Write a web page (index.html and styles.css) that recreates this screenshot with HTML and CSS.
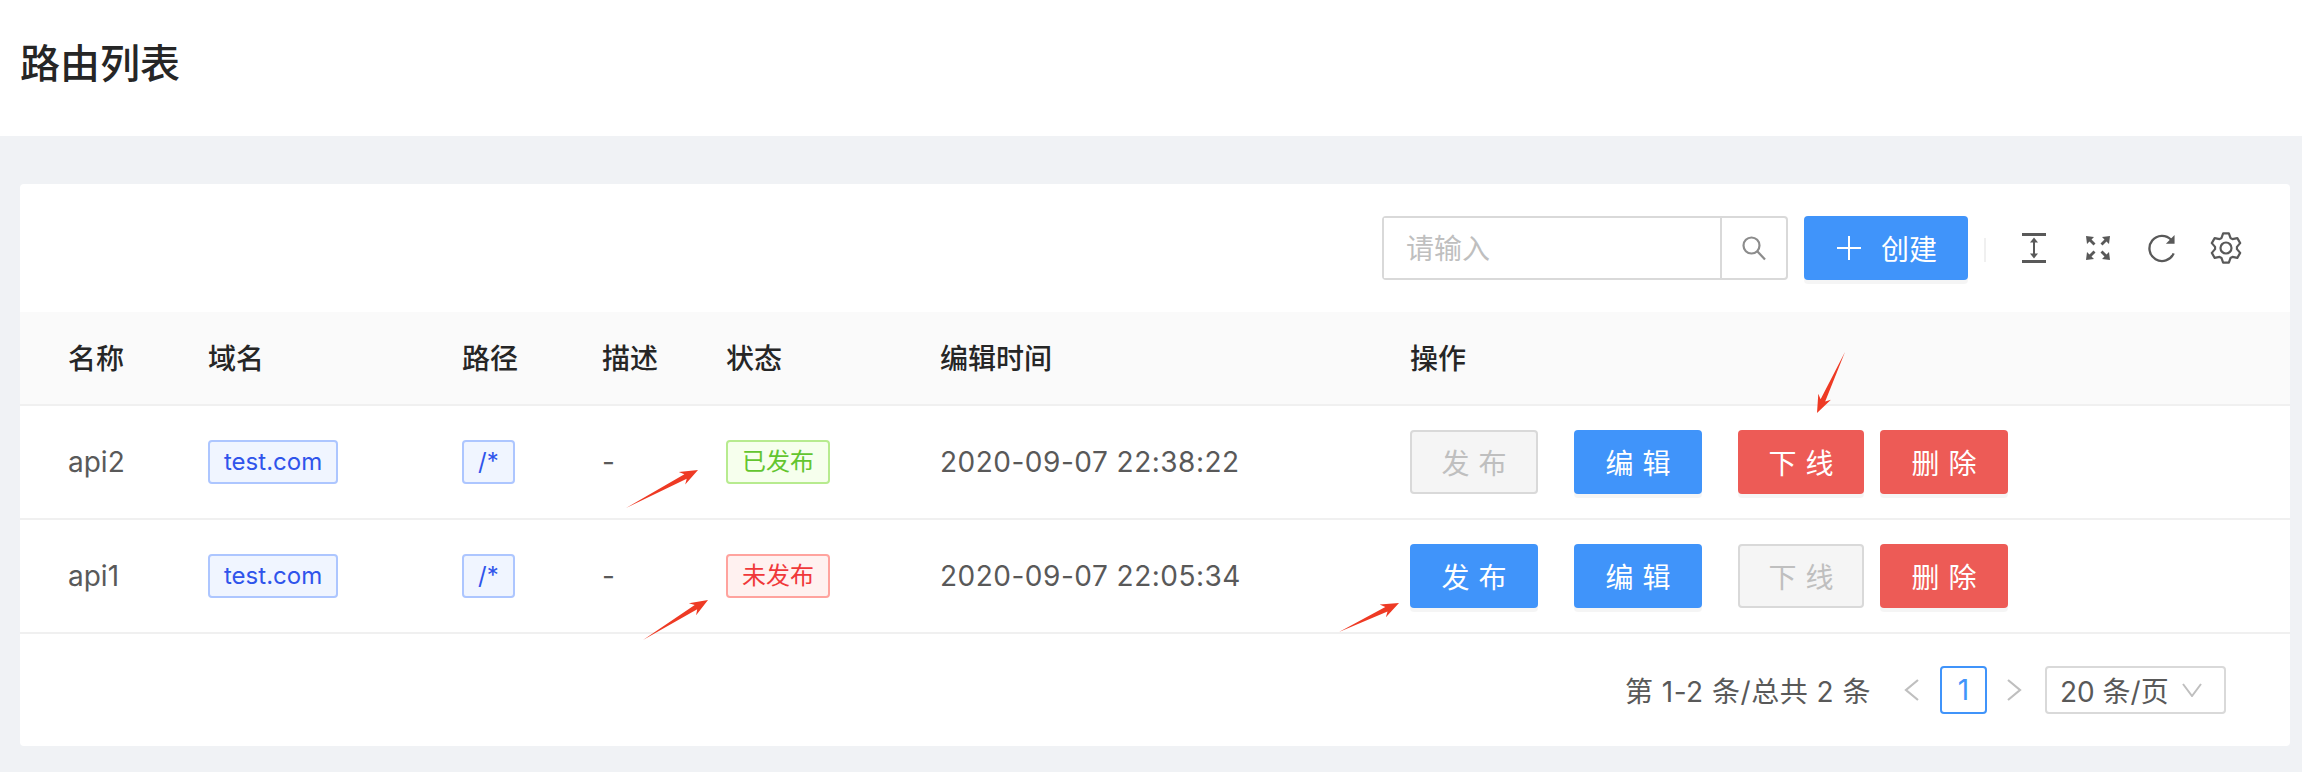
FILE: index.html
```html
<!DOCTYPE html>
<html lang="zh-CN">
<head>
    <meta charset="UTF-8">
    <title>路由列表</title>
    <link rel="stylesheet" href="styles.css">
</head>
<body>
    <div class="page-header"><h1>路由列表</h1></div>

    <div class="card">
        <div class="toolbar">
            <div class="search">
                <input class="search-input" type="text" placeholder="请输入">
                <span class="search-btn">
                    <svg width="26" height="26" viewBox="0 0 26 26" fill="none" stroke="#8c8c8c" stroke-width="2.2"><circle cx="10.5" cy="10.5" r="8"/><path d="M16.5 16.5l7.5 8"/></svg>
                </span>
            </div>
            <button class="btn btn-blue btn-create">
                <svg width="24" height="24" viewBox="0 0 24 24" stroke="#fff" stroke-width="2"><path d="M12 0v24M0 12h24"/></svg>
                <span>创建</span>
            </button>
            <span class="divider"></span>
            <div class="tool-icons">
                <svg width="24" height="30" viewBox="0 0 24 30" fill="#595959"><rect x="0" y="0" width="24" height="3"/><rect x="0" y="27" width="24" height="3"/><path d="M12 4.500l4 5h-3v11h3l-4 5-4-5h3v-11h-3z"/></svg>
                <svg class="icon-fullscreen" width="26" height="26" viewBox="0 0 26 26" fill="#595959"><path d="M1 1l8 1-2.500 2.500 4 4-2 2-4-4L2 9zM25 1l-1 8-2.500-2.500-4 4-2-2 4-4L17 2zM1 25l1-8 2.500 2.500 4-4 2 2-4 4L9 24zM25 25l-8-1 2.500-2.500-4-4 2-2 4 4L24 17z"/></svg>
                <svg width="30" height="31" viewBox="0 0 31 31" fill="none" stroke="#595959" stroke-width="2.400"><path d="M27.500 20.500A13 13 0 1 1 25 6.500"/><path d="M28.500 1.500v9h-9z" fill="#595959" stroke="none"/></svg>
                <svg class="icon-gear" width="32" height="32" viewBox="0 0 32 32" fill="none" stroke="#595959" stroke-width="2.200" stroke-linejoin="round"><path d="M11.530 5.950L13.140 1.280H18.860L20.470 5.950L22.470 7.100L27.320 6.160L30.180 11.120L26.940 14.850V17.150L30.180 20.880L27.320 25.840L22.470 24.900L20.470 26.050L18.860 30.720H13.140L11.530 26.050L9.530 24.900L4.680 25.840L1.820 20.880L5.060 17.150V14.850L1.820 11.120L4.680 6.160L9.530 7.100z"/><circle cx="16" cy="16" r="5.500"/></svg>
            </div>
        </div>

        <table class="route-table">
            <colgroup>
                <col class="col-name">
                <col class="col-domain">
                <col class="col-path">
                <col class="col-desc">
                <col class="col-status">
                <col class="col-time">
                <col>
            </colgroup>
            <thead>
                <tr>
                    <th>名称</th>
                    <th>域名</th>
                    <th>路径</th>
                    <th>描述</th>
                    <th>状态</th>
                    <th>编辑时间</th>
                    <th>操作</th>
                </tr>
            </thead>
            <tbody>
                <tr>
                    <td>api2</td>
                    <td><span class="tag tag-blue">test.com</span></td>
                    <td><span class="tag tag-blue">/*</span></td>
                    <td>-</td>
                    <td><span class="tag tag-green">已发布</span></td>
                    <td class="time">2020-09-07 22:38:22</td>
                    <td>
                        <div class="actions">
                            <button class="btn btn-off">发布</button>
                            <button class="btn btn-blue">编辑</button>
                            <button class="btn btn-red btn-narrow">下线</button>
                            <button class="btn btn-red">删除</button>
                        </div>
                    </td>
                </tr>
                <tr>
                    <td>api1</td>
                    <td><span class="tag tag-blue">test.com</span></td>
                    <td><span class="tag tag-blue">/*</span></td>
                    <td>-</td>
                    <td><span class="tag tag-red">未发布</span></td>
                    <td class="time">2020-09-07 22:05:34</td>
                    <td>
                        <div class="actions">
                            <button class="btn btn-blue">发布</button>
                            <button class="btn btn-blue">编辑</button>
                            <button class="btn btn-off btn-narrow">下线</button>
                            <button class="btn btn-red">删除</button>
                        </div>
                    </td>
                </tr>
            </tbody>
        </table>

        <div class="pagination">
            <span class="page-total">第 1-2 条/总共 2 条</span>
            <svg class="page-prev" width="15" height="22" viewBox="0 0 15 22" fill="none" stroke="#bfbfbf" stroke-width="2.200"><path d="M14 1L2 11l12 10"/></svg>
            <span class="page-num">1</span>
            <svg class="page-next" width="15" height="22" viewBox="0 0 15 22" fill="none" stroke="#bfbfbf" stroke-width="2.200"><path d="M1 1l12 10L1 21"/></svg>
            <div class="page-size">
                <span>20 条/页</span>
                <svg width="20" height="14" viewBox="0 0 20 14" fill="none" stroke="#bfbfbf" stroke-width="2"><path d="M1 1l9 12 9-12"/></svg>
            </div>
        </div>
    </div>

    <svg class="arrows" width="2302" height="772" viewBox="0 0 2302 772" fill="#ee3a24">
        <polygon points="626,508 686.700,478.700 685.200,484.500 698,470 678.800,472.100 684.400,474.300"/>
        <polygon points="643,640 697.200,609.300 696.100,615.200 708,600 688.900,603.200 694.700,605"/>
        <polygon points="1339,632 1387.500,611.400 1385.900,617.200 1399,603 1379.700,604.600 1385.300,607"/>
        <polygon points="1845,352 1825.200,401.400 1830.900,399.700 1817,413 1818.300,393.700 1820.600,399.200"/>
    </svg>
</body>
</html>
```

FILE: styles.css
```css
* {box-sizing: border-box;}
body {margin: 0; height: 772px; overflow: hidden; background-color: #f0f2f5; color: #595959; font-family: Inter, "Noto Sans CJK SC", sans-serif; font-size: 28px;}

.page-header {height: 136px; padding: 42px 0 0 20px; background-color: #fff;}
.page-header h1 {margin: 0; font-size: 40px; line-height: 44px; font-weight: 500; color: #262626;}

.card {height: 562px; margin: 48px 12px 0 20px; background-color: #fff; border-radius: 4px;}

.toolbar {display: flex; align-items: flex-start; height: 128px; padding: 32px 48px 0 0; justify-content: flex-end;}
.search {display: flex; width: 406px; height: 64px; border: 2px solid #d9d9d9; border-radius: 4px;}
.search-input {flex: 1; min-width: 0; border: none; outline: none; padding: 2px 0 0 22px; font: inherit; color: #595959;}
.search-input::placeholder {color: #bfbfbf;}
.search-btn {display: flex; align-items: center; justify-content: center; width: 66px; border-left: 2px solid #d9d9d9;}
.divider {width: 2px; height: 24px; margin: 22px 36px 0 16px; background-color: #f0f0f0;}
.tool-icons {display: flex; align-items: center; height: 64px;}
.icon-fullscreen {margin: 0 36px 0 39px;}
.icon-gear {margin-left: 33px;}

.route-table {width: 100%; border-collapse: separate; border-spacing: 0; table-layout: fixed;}
.col-name {width: 140px;}
.col-domain {width: 254px;}
.col-path {width: 140px;}
.col-desc {width: 124px;}
.col-status {width: 214px;}
.col-time {width: 470px;}
.route-table th {height: 94px; padding: 0 0 2px 48px; background-color: #fafafa; border-bottom: 2px solid #f0f0f0; text-align: left; font-weight: 500; color: #262626;}
.route-table td {height: 114px; padding: 0 0 0 48px; border-bottom: 2px solid #f0f0f0;}
.route-table .time {letter-spacing: 0.5px;}

.tag {display: inline-block; height: 44px; padding: 0 14px; border: 2px solid; border-radius: 4px; font-size: 24px; line-height: 40px; vertical-align: middle;}
.tag-blue {background-color: #f0f5ff; border-color: #adc6ff; color: #2f54eb;}
.tag-green {background-color: #f6ffed; border-color: #b7eb8f; color: #63c52f;}
.tag-red {background-color: #fff1f0; border-color: #ffa39e; color: #f0383a;}

.actions {display: flex; gap: 36px;}
.btn {width: 128px; height: 64px; padding: 0 0 0 9px; border: none; border-radius: 4px; font: inherit; letter-spacing: 9px; color: #fff; box-shadow: 0 4px 0 rgba(0, 0, 0, 0.04);}
.btn-blue {background-color: #4094fa;}
.btn-red {background-color: #ed5b56;}
.btn-off {background-color: #f5f5f5; border: 2px solid #d9d9d9; color: #bfbfbf; box-shadow: none;}
.btn-narrow {width: 126px; margin-right: -20px;}
.toolbar .btn-create {display: flex; align-items: center; gap: 20px; width: 164px; margin-left: 16px; padding: 0 0 0 33px; letter-spacing: 0;}

.pagination {display: flex; align-items: center; justify-content: flex-end; height: 112px; padding: 0 64px 0 0;}
.page-total {margin-right: 33px; letter-spacing: 0.5px;}
.page-num {width: 47px; height: 48px; border: 2px solid #4094fa; border-radius: 4px; color: #4094fa; text-align: center; line-height: 44px;}
.page-prev {margin-right: 21px;}
.page-next {margin: 0 23px 0 20px;}
.page-size {display: flex; align-items: center; justify-content: space-between; width: 181px; height: 48px; padding: 0 22px 0 13px; border: 2px solid #d9d9d9; border-radius: 4px;}

.arrows {position: absolute; left: 0; top: 0; pointer-events: none;}
```
